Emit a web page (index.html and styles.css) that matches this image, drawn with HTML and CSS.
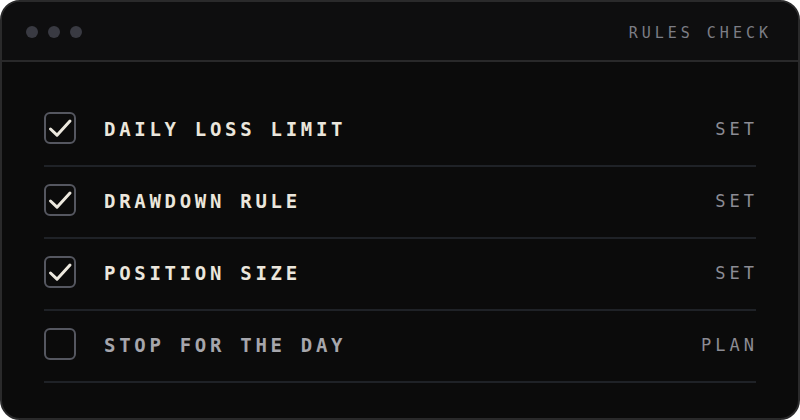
FILE: index.html
```html
<!DOCTYPE html>
<html>
<head>
<meta charset="utf-8">
<link rel="stylesheet" href="styles.css">
</head>
<body>
<div class="panel">
  <div class="header">
    <div class="dots"><span class="dot"></span><span class="dot"></span><span class="dot"></span></div>
    <div class="title">RULES CHECK</div>
  </div>
  <ul class="list">
    <li class="row done">
      <span class="box"><svg viewBox="0 0 32 32" width="32" height="32"><path d="M6.5 17 L13 23.2 L26 9" fill="none" stroke="#ece8de" stroke-width="3" stroke-linecap="round" stroke-linejoin="round"/></svg></span>
      <span class="label">DAILY LOSS LIMIT</span>
      <span class="tag">SET</span>
    </li>
    <li class="row done">
      <span class="box"><svg viewBox="0 0 32 32" width="32" height="32"><path d="M6.5 17 L13 23.2 L26 9" fill="none" stroke="#ece8de" stroke-width="3" stroke-linecap="round" stroke-linejoin="round"/></svg></span>
      <span class="label">DRAWDOWN RULE</span>
      <span class="tag">SET</span>
    </li>
    <li class="row done">
      <span class="box"><svg viewBox="0 0 32 32" width="32" height="32"><path d="M6.5 17 L13 23.2 L26 9" fill="none" stroke="#ece8de" stroke-width="3" stroke-linecap="round" stroke-linejoin="round"/></svg></span>
      <span class="label">POSITION SIZE</span>
      <span class="tag">SET</span>
    </li>
    <li class="row todo">
      <span class="box"></span>
      <span class="label">STOP FOR THE DAY</span>
      <span class="tag">PLAN</span>
    </li>
  </ul>
</div>
</body>
</html>
```
FILE: styles.css
```css
html, body {
  margin: 0;
  padding: 0;
  background: #ffffff;
}
body {
  width: 800px;
  height: 420px;
  font-family: "DejaVu Sans Mono", "Liberation Mono", monospace;
}
.panel {
  box-sizing: border-box;
  width: 800px;
  height: 420px;
  background: #0b0b0b;
  border: 2px solid #2a2a2b;
  border-radius: 20px;
  overflow: hidden;
}
.header {
  height: 58px;
  background: #0e0e0f;
  border-bottom: 2px solid #29292a;
  display: flex;
  align-items: center;
  justify-content: space-between;
  padding: 0 28px 0 24px;
}
.dots {
  display: flex;
  gap: 10px;
  margin-top: 2px;
}
.dot {
  width: 12px;
  height: 12px;
  border-radius: 50%;
  background: #393a42;
}
.title {
  font-size: 15px;
  letter-spacing: 4px;
  color: #7c7d85;
  margin-top: 4px;
  margin-right: -2px;
}
.list {
  list-style: none;
  margin: 0;
  padding: 33px 42px 0 42px;
}
.row {
  display: flex;
  align-items: center;
  padding: 17px 0 21px 0;
  border-bottom: 2px solid #1f2227;
}
.box {
  box-sizing: border-box;
  width: 32px;
  height: 32px;
  border: 2px solid #555760;
  border-radius: 6px;
  display: flex;
  align-items: center;
  justify-content: center;
  flex: none;
}
.box svg {
  display: block;
  flex: none;
}
.label {
  margin-left: 28px;
  font-size: 19px;
  font-weight: bold;
  letter-spacing: 3.7px;
  color: #ebe6dc;
  flex: 1;
  margin-top: 2px;
}
.todo .label {
  color: #a6a6ac;
}
.tag {
  font-size: 17px;
  letter-spacing: 4px;
  color: #8c8c94;
  margin-right: -2px;
  margin-top: 2px;
}
```
